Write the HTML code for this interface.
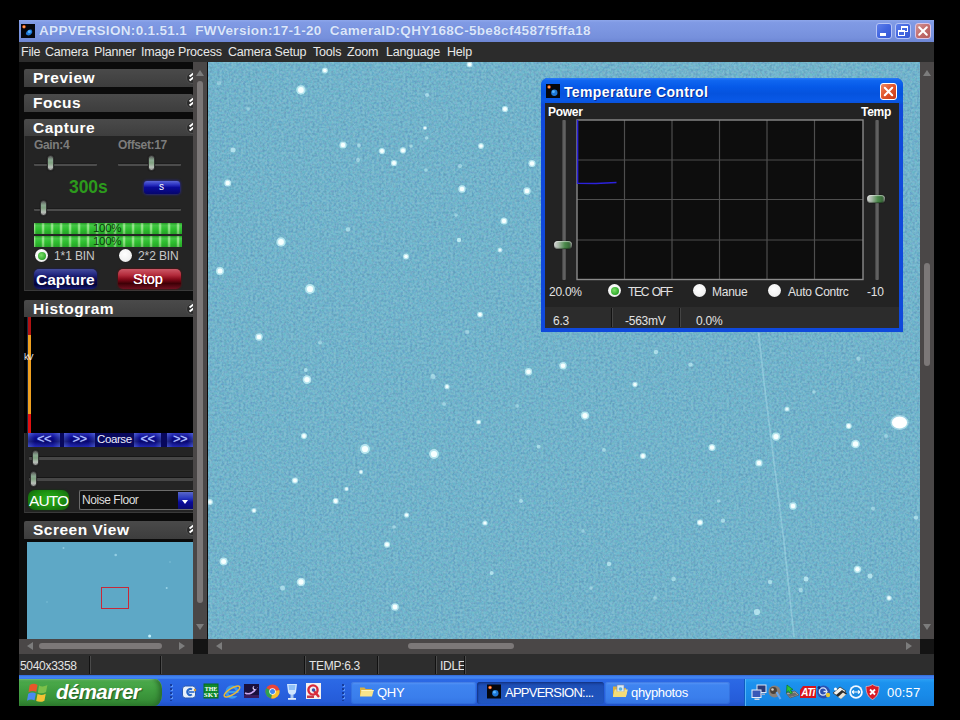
<!DOCTYPE html>
<html><head><meta charset="utf-8"><title>QHY</title>
<style>
*{box-sizing:border-box;margin:0;padding:0}
html,body{width:960px;height:720px;overflow:hidden;background:#000}
body{position:relative;font-family:"Liberation Sans",sans-serif;font-size:12px;color:#e6e6e6}
.a{position:absolute}
.t{position:absolute;white-space:nowrap;line-height:1}
/* title bar */
#title{left:19px;top:20px;width:915px;height:22px;background:linear-gradient(#8da6ea 0,#809ae4 12%,#7b95e0 50%,#7690dc 80%,#6d86d4 100%)}
#title .txt{left:20px;top:4px;font-size:13.5px;font-weight:bold;color:#dbe6fb;letter-spacing:.33px;text-shadow:0 0 1px #5f78c8}
.tb{top:3px;width:16px;height:16px;border:1px solid #b6c4f6;border-radius:3px;background:linear-gradient(135deg,#5f80ea 0,#4266e0 50%,#3658d4 100%)}
/* menu */
#menu{left:19px;top:42px;width:915px;height:20px;background:#2c2c2c}
#menu .t{top:4px;font-size:12.5px;color:#e8e8e8;letter-spacing:-.2px}
/* left panel */
#left{left:19px;top:62px;width:189px;height:592px;background:#0b0b0b}
.hd{left:5px;width:169px;height:18px;background:linear-gradient(#4a4a4a,#3d3d3d);border-radius:2px 2px 0 0}
.hd .t{left:9px;top:1px;font-size:15.5px;font-weight:bold;color:#fff;letter-spacing:.5px}
.pn{left:5px;width:169px;background:#242424}

.ic{position:absolute;left:162px;top:3px;width:12px;height:12px;border-radius:50%;background:#2c2c2c;border:1px solid #505050;overflow:hidden}
.ic:before{content:"";position:absolute;left:2px;top:1px;width:5px;height:2px;background:#fff;transform:rotate(-40deg)}
.ic:after{content:"";position:absolute;left:2px;top:5px;width:5px;height:2px;background:#fff;transform:rotate(-40deg)}
.gl{font-size:12px;font-weight:bold;color:#7c7c7c;letter-spacing:-.35px}
.bl{font-size:12px;color:#c8c8c8;letter-spacing:-.1px}
.trk{height:3px;background:#4c4c4c;border-top:1px solid #1c1c1c;border-radius:1px}
.trk2{height:4px;background:#474747;border-top:1px solid #161616;border-radius:1px}
.knob{width:7px;height:16px;border-radius:3.5px;background:linear-gradient(#5a5a5a 0,#8aa890 30%,#7fa080 50%,#b8c0b8 80%,#8a8a8a 100%);border:1px solid #333;box-shadow:0 0 1px #000}
.sbtn{border-radius:3px;background:linear-gradient(#5a66d8 0,#2a30c0 30%,#0a0a98 50%,#06066c 100%);box-shadow:0 0 3px #2a2ad0}
.pbar{width:148px;height:11px;background:linear-gradient(rgba(0,60,0,.25) 0,rgba(255,255,255,.12) 20%,rgba(255,255,255,0) 55%,rgba(0,40,0,.18) 100%),repeating-linear-gradient(90deg,#b4f0a4 0,#52d04e 1.2px,#2fc030 2.4px,#2cbc2e 7px,#52d04e 8px,#b4f0a4 9px);overflow:hidden}
.pbar .t{left:59px;top:0;font-size:11.5px;color:#0a3a0a;letter-spacing:-.3px}
.rad{width:13px;height:13px;border-radius:50%;background:radial-gradient(circle at 45% 40%,#fff 0,#f2f2f2 60%,#c8c8c8 100%);box-shadow:0 0 1px #000}
.cbtn{width:63px;height:20px;border-radius:5px;background:linear-gradient(#444c9c 0,#272c84 25%,#0c0c58 50%,#05053a 78%,#141a74 100%);box-shadow:0 0 2px #14146c}
.stbtn{width:63px;height:20px;border-radius:5px;background:linear-gradient(#cc5866 0,#b42c3c 30%,#880a1a 50%,#3e0006 72%,#701020 100%);box-shadow:0 0 2px #700}
.nb{top:0;height:14px;background:linear-gradient(rgba(120,140,255,.35) 0,rgba(0,0,40,.15) 35%,rgba(0,0,30,.35) 60%,rgba(90,110,240,.3) 100%),linear-gradient(90deg,#3a48c0 0,#0c0ca0 22%,#08088c 50%,#0c0ca0 78%,#3a48c0 100%);overflow:hidden}
.nb span{position:absolute;left:0;right:0;top:-1px;text-align:center;font-size:13px;line-height:14px;color:#aebeff;font-weight:normal;letter-spacing:-.5px;text-shadow:0 0 1px #8ea0ff}

.dots{width:4px;height:17px;background:radial-gradient(circle at 1px 1px,#163c9c 0,#163c9c .9px,transparent 1.1px) 0 0/4px 4px, radial-gradient(circle at 2px 2px,#5a94f4 0,#5a94f4 .8px,transparent 1px) 0 0/4px 4px}
.tk{top:7px;height:22px;border-radius:3px;background:linear-gradient(#5a98f8 0,#3f84f0 14%,#3a7eec 70%,#3474e2 100%);box-shadow:inset 0 0 0 1px rgba(40,90,200,.35)}
.tk.act{background:linear-gradient(#1a44a4 0,#1e50b8 20%,#2056c0 100%);box-shadow:inset 1px 1px 2px #123280}

.dl{font-size:12px;color:#e2e2e2;letter-spacing:-.25px}
.vtrk{width:4px;background:linear-gradient(90deg,#3a3a3a,#6a6a6a 50%,#4a4a4a);border-radius:1px}
.hknob{width:18px;height:8px;border-radius:4px;background:linear-gradient(90deg,#d8d8d8 0,#a8b8a8 25%,#4a8a4a 60%,#3a6a3a 85%,#8a8a8a 100%);box-shadow:0 0 1px #000, inset 0 1px 1px rgba(255,255,255,.5), inset 0 -1px 1px rgba(0,0,0,.4)}
/* image */
#img{left:208px;top:62px;width:712px;height:577px;background:#72b3cb;overflow:hidden}
/* scrollbars */
.sb{background:#4a4747}
.th{background:#7c7878;border-radius:3px}
/* status */
#status{left:19px;top:654px;width:915px;height:21px;background:#2d2d2d}
#status .t{top:6px;font-size:12px;color:#e4e4e4;letter-spacing:-.3px}
#status i{position:absolute;top:2px;width:1px;height:18px;background:#111;border-right:1px solid #4a4a4a;box-sizing:content-box}
/* taskbar */
#task{left:19px;top:675px;width:915px;height:31px;background:linear-gradient(#3a80ee 0,#2c6ae6 10%,#2862e0 50%,#255cd8 85%,#1f50c4 100%)}
</style></head><body>

<div id="title" class="a">
  <svg class="a" style="left:2px;top:4px" width="14" height="14" viewBox="0 0 16 16"><rect width="16" height="16" fill="#05070d"/><circle cx="3.4" cy="3.2" r="2" fill="#ff5a1e"/><circle cx="3.4" cy="3.2" r="1" fill="#ffd070"/><path d="M5.500 11.500C6 8 9 6 12 6.500 13.500 8 13 11 10.500 12.500 8.500 13.500 6.500 13 5.500 11.500z" fill="#1e78d8"/><circle cx="9.500" cy="8.800" r="1.700" fill="#59b6ff"/></svg>
  <div class="t txt">APPVERSION:0.1.51.1&nbsp; FWVersion:17-1-20&nbsp; CameraID:QHY168C-5be8cf4587f5ffa18</div>
  <div class="a tb" style="left:857px"><div class="a" style="left:3px;top:9px;width:6px;height:3px;background:#fff"></div></div>
  <div class="a tb" style="left:876px"><div class="a" style="left:5px;top:2px;width:7px;height:6px;border:1px solid #fff;border-top-width:2px"></div><div class="a" style="left:2px;top:6px;width:7px;height:6px;border:1px solid #fff;border-top-width:2px;background:#4468e0"></div></div>
  <div class="a tb" style="left:896px;border-color:#dcc4e4;background:linear-gradient(135deg,#d29494 0,#c06a6a 55%,#b45a5a 100%)"><svg class="a" style="left:0;top:0" width="14" height="14" viewBox="0 0 14 14"><path d="M3.2 3.2L10.8 10.8M10.8 3.2L3.2 10.8" stroke="#fff" stroke-width="2" stroke-linecap="round"/></svg></div>
</div>

<div id="menu" class="a">
  <div class="t" style="left:2px">File</div>
  <div class="t" style="left:26px">Camera</div>
  <div class="t" style="left:75px">Planner</div>
  <div class="t" style="left:122px">Image Process</div>
  <div class="t" style="left:209px">Camera Setup</div>
  <div class="t" style="left:294px">Tools</div>
  <div class="t" style="left:328px">Zoom</div>
  <div class="t" style="left:367px">Language</div>
  <div class="t" style="left:428px">Help</div>
</div>

<div id="left" class="a">
<!-- headers -->
<div class="a hd" style="top:7px"><div class="t">Preview</div><div class="ic"></div></div>
<div class="a hd" style="top:32px"><div class="t">Focus</div><div class="ic"></div></div>
<div class="a hd" style="top:57px"><div class="t">Capture</div><div class="ic"></div></div>
<!-- capture panel : page y 136..291 => local 74..229 -->
<div class="a pn" style="top:74px;height:155px;border-left:1px solid #343434;border-bottom:1px solid #3a3a3a">
  <div class="t gl" style="left:9px;top:3px">Gain:4</div>
  <div class="t gl" style="left:93px;top:3px">Offset:17</div>
  <div class="a trk" style="left:9px;top:27px;width:63px"></div><div class="a knob" style="left:22px;top:19px"></div>
  <div class="a trk" style="left:93px;top:27px;width:63px"></div><div class="a knob" style="left:123px;top:19px"></div>
  <div class="t" style="left:44px;top:43px;font-size:17.5px;font-weight:bold;color:#2c9a1c;letter-spacing:-.1px">300s</div>
  <div class="a sbtn" style="left:119px;top:45px;width:36px;height:13px"><div class="t" style="left:15px;top:1px;font-size:10px;color:#fff">s</div></div>
  <div class="a trk" style="left:9px;top:72px;width:147px"></div><div class="a knob" style="left:15px;top:64px"></div>
  <div class="a pbar" style="left:9px;top:87px"><div class="t">100%</div></div>
  <div class="a pbar" style="left:9px;top:99.5px"><div class="t">100%</div></div>
  <div class="a rad" style="left:10px;top:113px"><div class="a" style="left:2.5px;top:2.5px;width:8px;height:8px;border-radius:50%;background:radial-gradient(circle at 40% 40%,#7de06a,#2ea82a 70%)"></div></div>
  <div class="t bl" style="left:29px;top:114px">1*1 BIN</div>
  <div class="a rad" style="left:94px;top:113px"></div>
  <div class="t bl" style="left:113px;top:114px">2*2 BIN</div>
  <div class="a cbtn" style="left:9px;top:133px"><div class="t" style="left:2px;top:3px;font-size:15.5px;font-weight:bold;color:#fff">Capture</div></div>
  <div class="a stbtn" style="left:93px;top:133px"><div class="t" style="left:15px;top:3px;font-size:14.5px;color:#fff;text-shadow:0 0 .5px #fff">Stop</div></div>
</div>
<!-- histogram -->
<div class="a hd" style="top:238px"><div class="t">Histogram</div><div class="ic"></div></div>
<div class="a" style="left:5px;top:255px;width:169px;height:116px;background:#000">
  <div class="a" style="left:3px;top:0;width:1px;height:116px;background:#1c2a40"></div>
  <div class="a" style="left:4px;top:0;width:3px;height:18px;background:#b01212"></div>
  <div class="a" style="left:4px;top:18px;width:3px;height:79px;background:#f0a020"></div>
  <div class="a" style="left:4px;top:97px;width:3px;height:19px;background:#e01010"></div>
  <div class="t" style="left:0;top:36px;font-size:9px;color:#eee;letter-spacing:-1px">kV</div>
</div>
<div class="a pn" style="top:371px;height:80px;border-left:1px solid #343434;border-bottom:1px solid #3a3a3a"></div>
<div class="a" style="left:9px;top:371px;width:165px;height:14px;background:#08085c">
  <div class="a nb" style="left:0;width:32px"><span>&lt;&lt;</span></div>
  <div class="a nb" style="left:36px;width:31px"><span>&gt;&gt;</span></div>
  <div class="t" style="left:69px;top:1px;font-size:11.5px;color:#eef;letter-spacing:-.4px">Coarse</div>
  <div class="a nb" style="left:106px;width:27px"><span>&lt;&lt;</span></div>
  <div class="a nb" style="left:139px;width:26px"><span>&gt;&gt;</span></div>
</div>
<div class="a trk2" style="left:10px;top:393.5px;width:164px"></div><div class="a knob" style="left:13px;top:388px"></div>
<div class="a trk2" style="left:10px;top:414.5px;width:164px"></div><div class="a knob" style="left:11px;top:409px"></div>
<div class="a" style="left:9px;top:428px;width:41px;height:20px;border-radius:7px;background:radial-gradient(ellipse at 50% 45%,#2cb01c 0,#1f9412 45%,#0e5c0a 100%);box-shadow:0 0 2px #0a3a06"><div class="t" style="left:1px;top:3px;font-size:15.5px;color:#fff;letter-spacing:-.9px">AUTO</div></div>
<div class="a" style="left:60px;top:428px;width:114px;height:20px;background:#111;border:1px solid #6c6c6c;border-right:0;border-radius:2px 0 0 2px">
  <div class="t" style="left:2px;top:3px;font-size:12px;color:#ddd;letter-spacing:-.45px">Noise Floor</div>
  <div class="a" style="left:98px;top:1px;width:15px;height:17px;background:linear-gradient(#5a68c8 0,#2a3ac0 35%,#0a0a9a 60%,#0a0a70 100%)"><div class="a" style="left:4px;top:8px;width:0;height:0;border:3.5px solid transparent;border-top:4px solid #fff;border-bottom:0"></div></div>
</div>
<!-- screen view -->
<div class="a hd" style="top:459px"><div class="t">Screen View</div><div class="ic"></div></div>
<div class="a" style="left:8px;top:480px;width:166px;height:97px;background:#5ea8c6;overflow:hidden">
  <svg class="a" style="left:0;top:0" width="166" height="97"><g fill="#c8f4ff">
  <circle cx="36.5" cy="6" r="1" opacity=".45"/><circle cx="88.7" cy="13" r="1.3" opacity=".5"/><circle cx="139.7" cy="46" r="1" opacity=".55"/><circle cx="122.6" cy="94" r="1.5" opacity=".95"/><circle cx="143" cy="20" r=".8" opacity=".35"/><circle cx="20" cy="60" r=".8" opacity=".3"/>
  </g><rect x="74.500" y="45.500" width="27" height="21" fill="none" stroke="#c82838" stroke-width="1"/></svg>
</div>
<!-- panel bottom h-scrollbar -->
<div class="a sb" style="left:0;top:577px;width:174px;height:15px">
  <div class="a" style="left:8px;top:3px;width:0;height:0;border:4px solid transparent;border-left:0;border-right:6px solid #7c7c7c"></div>
  <div class="a th" style="left:20px;top:4px;width:123px;height:6px"></div>
  <div class="a" style="left:160px;top:3px;width:0;height:0;border:4px solid transparent;border-right:0;border-left:6px solid #7c7c7c"></div>
</div>
<div class="a" style="left:174px;top:577px;width:15px;height:15px;background:#141414"></div>
<!-- panel v-scrollbar -->
<div class="a sb" style="left:174px;top:0;width:14px;height:577px">
  <div class="a" style="left:3px;top:8px;width:0;height:0;border:4px solid transparent;border-top:0;border-bottom:6px solid #7c7c7c"></div>
  <div class="a th" style="left:4px;top:19px;width:6px;height:522px"></div>
  <div class="a" style="left:3px;top:562px;width:0;height:0;border:4px solid transparent;border-bottom:0;border-top:6px solid #7c7c7c"></div>
</div>

</div>

<div id="img" class="a">
<svg class="a" style="left:0;top:0" width="712" height="577" viewBox="0 0 712 577">
<defs>
<filter id="nz" x="0" y="0" width="100%" height="100%" color-interpolation-filters="sRGB"><feTurbulence type="fractalNoise" baseFrequency="0.42" numOctaves="2" seed="7" result="n"/><feColorMatrix type="matrix" values="1.7 0.9 0 0 -0.853  0.7 1.9 0 0 -0.598  0.5 0.9 0.8 0 -0.304  0 0 0 0 1"/></filter>
<filter id="bl" x="-5%" y="-5%" width="110%" height="110%"><feGaussianBlur stdDeviation="0.65"/></filter>
</defs>
<rect width="712" height="577" filter="url(#nz)" opacity=".12"/>
<path d="M550.5 270.5 L556 320 L566 400 L576 480 L586 575" stroke="#b4e4f0" stroke-width="1.700" fill="none" opacity=".4" filter="url(#bl)"/>
<g filter="url(#bl)">
<circle cx="116.9" cy="8.5" r="2.9" fill="#c8f2f8" opacity="0.80"/>
<circle cx="116.9" cy="8.5" r="1.8" fill="#f6ffff" opacity="1.00"/>
<circle cx="92.9" cy="28.0" r="4.7" fill="#c8f2f8" opacity="0.80"/>
<circle cx="92.9" cy="28.0" r="2.9" fill="#f6ffff" opacity="1.00"/>
<circle cx="261.6" cy="2.5" r="2.9" fill="#c8f2f8" opacity="0.80"/>
<circle cx="261.6" cy="2.5" r="1.8" fill="#f6ffff" opacity="1.00"/>
<circle cx="219.0" cy="33.0" r="2.0" fill="#c8f2f8" opacity="0.62"/>
<circle cx="297.0" cy="47.0" r="3.1" fill="#c8f2f8" opacity="0.80"/>
<circle cx="297.0" cy="47.0" r="2.0" fill="#f6ffff" opacity="1.00"/>
<circle cx="217.0" cy="66.0" r="2.0" fill="#c8f2f8" opacity="0.64"/>
<circle cx="217.0" cy="66.0" r="1.3" fill="#f6ffff" opacity="0.80"/>
<circle cx="218.5" cy="76.0" r="1.8" fill="#c8f2f8" opacity="0.56"/>
<circle cx="135.0" cy="83.0" r="3.6" fill="#c8f2f8" opacity="0.80"/>
<circle cx="135.0" cy="83.0" r="2.2" fill="#f6ffff" opacity="1.00"/>
<circle cx="151.0" cy="83.5" r="2.0" fill="#c8f2f8" opacity="0.56"/>
<circle cx="174.0" cy="89.0" r="3.1" fill="#c8f2f8" opacity="0.80"/>
<circle cx="174.0" cy="89.0" r="2.0" fill="#f6ffff" opacity="1.00"/>
<circle cx="195.0" cy="88.4" r="3.1" fill="#c8f2f8" opacity="0.80"/>
<circle cx="195.0" cy="88.4" r="2.0" fill="#f6ffff" opacity="1.00"/>
<circle cx="203.0" cy="84.0" r="1.8" fill="#c8f2f8" opacity="0.50"/>
<circle cx="186.0" cy="101.0" r="3.1" fill="#c8f2f8" opacity="0.80"/>
<circle cx="186.0" cy="101.0" r="2.0" fill="#f6ffff" opacity="1.00"/>
<circle cx="150.0" cy="98.0" r="2.0" fill="#c8f2f8" opacity="0.56"/>
<circle cx="273.0" cy="84.0" r="2.9" fill="#c8f2f8" opacity="0.80"/>
<circle cx="273.0" cy="84.0" r="1.8" fill="#f6ffff" opacity="1.00"/>
<circle cx="324.0" cy="101.5" r="3.6" fill="#c8f2f8" opacity="0.80"/>
<circle cx="324.0" cy="101.5" r="2.2" fill="#f6ffff" opacity="1.00"/>
<circle cx="25.0" cy="88.0" r="2.5" fill="#c8f2f8" opacity="0.75"/>
<circle cx="19.7" cy="121.0" r="3.5" fill="#c8f2f8" opacity="0.80"/>
<circle cx="19.7" cy="121.0" r="2.2" fill="#f6ffff" opacity="1.00"/>
<circle cx="254.0" cy="127.0" r="3.7" fill="#c8f2f8" opacity="0.80"/>
<circle cx="254.0" cy="127.0" r="2.3" fill="#f6ffff" opacity="1.00"/>
<circle cx="319.0" cy="129.0" r="3.7" fill="#c8f2f8" opacity="0.80"/>
<circle cx="319.0" cy="129.0" r="2.3" fill="#f6ffff" opacity="1.00"/>
<circle cx="218.0" cy="108.0" r="1.8" fill="#c8f2f8" opacity="0.50"/>
<circle cx="252.0" cy="104.0" r="2.0" fill="#c8f2f8" opacity="0.50"/>
<circle cx="296.0" cy="159.0" r="3.5" fill="#c8f2f8" opacity="0.80"/>
<circle cx="296.0" cy="159.0" r="2.2" fill="#f6ffff" opacity="1.00"/>
<circle cx="140.0" cy="167.5" r="2.2" fill="#c8f2f8" opacity="0.62"/>
<circle cx="73.0" cy="180.0" r="4.7" fill="#c8f2f8" opacity="0.80"/>
<circle cx="73.0" cy="180.0" r="2.9" fill="#f6ffff" opacity="1.00"/>
<circle cx="251.0" cy="178.0" r="2.2" fill="#c8f2f8" opacity="0.88"/>
<circle cx="292.0" cy="188.0" r="2.5" fill="#c8f2f8" opacity="0.64"/>
<circle cx="292.0" cy="188.0" r="1.5" fill="#f6ffff" opacity="0.80"/>
<circle cx="198.0" cy="194.5" r="2.9" fill="#c8f2f8" opacity="0.80"/>
<circle cx="198.0" cy="194.5" r="1.8" fill="#f6ffff" opacity="1.00"/>
<circle cx="12.0" cy="209.0" r="4.0" fill="#c8f2f8" opacity="0.80"/>
<circle cx="12.0" cy="209.0" r="2.5" fill="#f6ffff" opacity="1.00"/>
<circle cx="102.0" cy="227.0" r="4.9" fill="#c8f2f8" opacity="0.80"/>
<circle cx="102.0" cy="227.0" r="3.1" fill="#f6ffff" opacity="1.00"/>
<circle cx="272.0" cy="252.6" r="2.9" fill="#c8f2f8" opacity="0.80"/>
<circle cx="272.0" cy="252.6" r="1.8" fill="#f6ffff" opacity="1.00"/>
<circle cx="11.0" cy="21.0" r="2.2" fill="#c8f2f8" opacity="0.38"/>
<circle cx="40.0" cy="47.0" r="1.8" fill="#c8f2f8" opacity="0.44"/>
<circle cx="248.0" cy="153.0" r="1.8" fill="#c8f2f8" opacity="0.50"/>
<circle cx="51.0" cy="275.0" r="3.7" fill="#c8f2f8" opacity="0.80"/>
<circle cx="51.0" cy="275.0" r="2.3" fill="#f6ffff" opacity="1.00"/>
<circle cx="99.0" cy="317.6" r="4.3" fill="#c8f2f8" opacity="0.80"/>
<circle cx="99.0" cy="317.6" r="2.7" fill="#f6ffff" opacity="1.00"/>
<circle cx="97.7" cy="308.0" r="2.0" fill="#c8f2f8" opacity="0.62"/>
<circle cx="112.0" cy="280.5" r="2.0" fill="#c8f2f8" opacity="0.50"/>
<circle cx="320.5" cy="309.7" r="3.7" fill="#c8f2f8" opacity="0.80"/>
<circle cx="320.5" cy="309.7" r="2.3" fill="#f6ffff" opacity="1.00"/>
<circle cx="225.0" cy="314.6" r="2.5" fill="#c8f2f8" opacity="0.56"/>
<circle cx="239.0" cy="324.7" r="2.6" fill="#c8f2f8" opacity="0.72"/>
<circle cx="239.0" cy="324.7" r="1.6" fill="#f6ffff" opacity="0.90"/>
<circle cx="270.6" cy="360.0" r="2.5" fill="#c8f2f8" opacity="0.72"/>
<circle cx="270.6" cy="360.0" r="1.5" fill="#f6ffff" opacity="0.90"/>
<circle cx="96.0" cy="374.0" r="3.0" fill="#c8f2f8" opacity="0.80"/>
<circle cx="96.0" cy="374.0" r="1.9" fill="#f6ffff" opacity="1.00"/>
<circle cx="157.0" cy="387.0" r="4.9" fill="#c8f2f8" opacity="0.80"/>
<circle cx="157.0" cy="387.0" r="3.1" fill="#f6ffff" opacity="1.00"/>
<circle cx="226.0" cy="392.0" r="4.9" fill="#c8f2f8" opacity="0.80"/>
<circle cx="226.0" cy="392.0" r="3.1" fill="#f6ffff" opacity="1.00"/>
<circle cx="153.0" cy="410.0" r="2.2" fill="#c8f2f8" opacity="0.64"/>
<circle cx="153.0" cy="410.0" r="1.4" fill="#f6ffff" opacity="0.80"/>
<circle cx="87.0" cy="418.5" r="3.1" fill="#c8f2f8" opacity="0.80"/>
<circle cx="87.0" cy="418.5" r="2.0" fill="#f6ffff" opacity="1.00"/>
<circle cx="138.6" cy="427.0" r="2.2" fill="#c8f2f8" opacity="0.64"/>
<circle cx="138.6" cy="427.0" r="1.4" fill="#f6ffff" opacity="0.80"/>
<circle cx="127.7" cy="439.0" r="3.0" fill="#c8f2f8" opacity="0.80"/>
<circle cx="127.7" cy="439.0" r="1.9" fill="#f6ffff" opacity="1.00"/>
<circle cx="46.0" cy="448.5" r="2.5" fill="#c8f2f8" opacity="0.72"/>
<circle cx="46.0" cy="448.5" r="1.5" fill="#f6ffff" opacity="0.90"/>
<circle cx="198.6" cy="453.0" r="2.6" fill="#c8f2f8" opacity="0.76"/>
<circle cx="198.6" cy="453.0" r="1.6" fill="#f6ffff" opacity="0.95"/>
<circle cx="277.0" cy="461.0" r="2.6" fill="#c8f2f8" opacity="0.76"/>
<circle cx="277.0" cy="461.0" r="1.6" fill="#f6ffff" opacity="0.95"/>
<circle cx="179.0" cy="482.6" r="3.1" fill="#c8f2f8" opacity="0.80"/>
<circle cx="179.0" cy="482.6" r="2.0" fill="#f6ffff" opacity="1.00"/>
<circle cx="15.6" cy="499.5" r="4.0" fill="#c8f2f8" opacity="0.80"/>
<circle cx="15.6" cy="499.5" r="2.5" fill="#f6ffff" opacity="1.00"/>
<circle cx="93.0" cy="520.0" r="4.3" fill="#c8f2f8" opacity="0.80"/>
<circle cx="93.0" cy="520.0" r="2.7" fill="#f6ffff" opacity="1.00"/>
<circle cx="313.0" cy="439.0" r="2.0" fill="#c8f2f8" opacity="0.62"/>
<circle cx="330.6" cy="384.7" r="2.0" fill="#c8f2f8" opacity="0.62"/>
<circle cx="283.7" cy="511.0" r="2.0" fill="#c8f2f8" opacity="0.75"/>
<circle cx="2.0" cy="440.0" r="2.9" fill="#c8f2f8" opacity="0.80"/>
<circle cx="2.0" cy="440.0" r="1.8" fill="#f6ffff" opacity="1.00"/>
<circle cx="259.0" cy="270.0" r="2.2" fill="#c8f2f8" opacity="0.44"/>
<circle cx="186.0" cy="465.0" r="1.8" fill="#c8f2f8" opacity="0.56"/>
<circle cx="236.0" cy="342.0" r="2.0" fill="#c8f2f8" opacity="0.50"/>
<circle cx="309.0" cy="344.0" r="2.0" fill="#c8f2f8" opacity="0.44"/>
<circle cx="74.5" cy="526.0" r="2.5" fill="#c8f2f8" opacity="0.62"/>
<circle cx="187.0" cy="545.0" r="3.8" fill="#c8f2f8" opacity="0.80"/>
<circle cx="187.0" cy="545.0" r="2.4" fill="#f6ffff" opacity="1.00"/>
<circle cx="355.0" cy="303.7" r="3.7" fill="#c8f2f8" opacity="0.80"/>
<circle cx="355.0" cy="303.7" r="2.3" fill="#f6ffff" opacity="1.00"/>
<circle cx="448.0" cy="290.0" r="2.2" fill="#c8f2f8" opacity="0.69"/>
<circle cx="482.5" cy="302.6" r="2.2" fill="#c8f2f8" opacity="0.62"/>
<circle cx="427.0" cy="322.5" r="2.7" fill="#c8f2f8" opacity="0.72"/>
<circle cx="427.0" cy="322.5" r="1.7" fill="#f6ffff" opacity="0.90"/>
<circle cx="377.0" cy="353.6" r="4.1" fill="#c8f2f8" opacity="0.80"/>
<circle cx="377.0" cy="353.6" r="2.6" fill="#f6ffff" opacity="1.00"/>
<circle cx="579.0" cy="347.0" r="2.6" fill="#c8f2f8" opacity="0.64"/>
<circle cx="579.0" cy="347.0" r="1.6" fill="#f6ffff" opacity="0.80"/>
<circle cx="568.0" cy="374.6" r="4.1" fill="#c8f2f8" opacity="0.80"/>
<circle cx="568.0" cy="374.6" r="2.6" fill="#f6ffff" opacity="1.00"/>
<circle cx="504.0" cy="385.5" r="3.5" fill="#c8f2f8" opacity="0.80"/>
<circle cx="504.0" cy="385.5" r="2.2" fill="#f6ffff" opacity="1.00"/>
<circle cx="435.0" cy="394.0" r="3.0" fill="#c8f2f8" opacity="0.80"/>
<circle cx="435.0" cy="394.0" r="1.9" fill="#f6ffff" opacity="1.00"/>
<circle cx="551.0" cy="401.0" r="3.6" fill="#c8f2f8" opacity="0.80"/>
<circle cx="551.0" cy="401.0" r="2.2" fill="#f6ffff" opacity="1.00"/>
<circle cx="640.7" cy="364.0" r="3.0" fill="#c8f2f8" opacity="0.80"/>
<circle cx="640.7" cy="364.0" r="1.9" fill="#f6ffff" opacity="1.00"/>
<circle cx="647.5" cy="382.0" r="4.3" fill="#c8f2f8" opacity="0.80"/>
<circle cx="647.5" cy="382.0" r="2.7" fill="#f6ffff" opacity="1.00"/>
<circle cx="585.0" cy="444.0" r="3.7" fill="#c8f2f8" opacity="0.80"/>
<circle cx="585.0" cy="444.0" r="2.3" fill="#f6ffff" opacity="1.00"/>
<circle cx="492.0" cy="460.5" r="3.1" fill="#c8f2f8" opacity="0.80"/>
<circle cx="492.0" cy="460.5" r="2.0" fill="#f6ffff" opacity="1.00"/>
<circle cx="515.0" cy="458.6" r="2.2" fill="#c8f2f8" opacity="0.62"/>
<circle cx="649.5" cy="507.3" r="3.6" fill="#c8f2f8" opacity="0.80"/>
<circle cx="649.5" cy="507.3" r="2.2" fill="#f6ffff" opacity="1.00"/>
<circle cx="662.0" cy="514.0" r="2.5" fill="#c8f2f8" opacity="0.75"/>
<circle cx="708.0" cy="455.6" r="2.2" fill="#c8f2f8" opacity="0.62"/>
<circle cx="396.0" cy="388.0" r="2.0" fill="#c8f2f8" opacity="0.56"/>
<circle cx="401.0" cy="502.0" r="2.2" fill="#c8f2f8" opacity="0.69"/>
<circle cx="650.5" cy="296.6" r="2.2" fill="#c8f2f8" opacity="0.50"/>
<circle cx="598.0" cy="517.0" r="2.5" fill="#c8f2f8" opacity="0.75"/>
<circle cx="606.0" cy="330.0" r="1.8" fill="#c8f2f8" opacity="0.50"/>
<circle cx="510.6" cy="439.0" r="1.8" fill="#c8f2f8" opacity="0.50"/>
<circle cx="665.0" cy="446.6" r="2.0" fill="#c8f2f8" opacity="0.50"/>
<circle cx="375.0" cy="469.0" r="1.8" fill="#c8f2f8" opacity="0.44"/>
<circle cx="678.0" cy="374.0" r="2.0" fill="#c8f2f8" opacity="0.50"/>
<circle cx="681.0" cy="536.0" r="2.7" fill="#c8f2f8" opacity="0.72"/>
<circle cx="681.0" cy="536.0" r="1.7" fill="#f6ffff" opacity="0.90"/>
<circle cx="549.0" cy="550.0" r="3.1" fill="#c8f2f8" opacity="0.75"/>
<circle cx="562.0" cy="520.0" r="2.2" fill="#c8f2f8" opacity="0.62"/>
<circle cx="592.7" cy="528.0" r="2.2" fill="#c8f2f8" opacity="0.56"/>
<circle cx="465.6" cy="517.0" r="2.2" fill="#c8f2f8" opacity="0.56"/>
<circle cx="383.0" cy="526.0" r="1.8" fill="#c8f2f8" opacity="0.50"/>
<circle cx="447.0" cy="536.0" r="1.8" fill="#c8f2f8" opacity="0.50"/>
<ellipse cx="691.5" cy="360.5" rx="9.1" ry="7.5" fill="#c4eef6" opacity=".6"/>
<ellipse cx="691.5" cy="360.5" rx="7.6" ry="6.0" fill="#ffffff"/>
</g>
</svg>
</div>

<!-- right vertical scrollbar -->
<div class="a sb" style="left:920px;top:62px;width:14px;height:577px">
  <div class="a" style="left:3px;top:8px;width:0;height:0;border:4px solid transparent;border-top:0;border-bottom:6px solid #7c7c7c"></div>
  <div class="a th" style="left:4px;top:201px;width:6px;height:103px"></div>
  <div class="a" style="left:3px;top:562px;width:0;height:0;border:4px solid transparent;border-bottom:0;border-top:6px solid #7c7c7c"></div>
</div>
<!-- bottom horizontal scrollbar -->
<div class="a sb" style="left:208px;top:639px;width:712px;height:15px">
  <div class="a" style="left:8px;top:3px;width:0;height:0;border:4px solid transparent;border-left:0;border-right:6px solid #7c7c7c"></div>
  <div class="a th" style="left:200px;top:4px;width:106px;height:6px"></div>
  <div class="a" style="left:698px;top:3px;width:0;height:0;border:4px solid transparent;border-right:0;border-left:6px solid #7c7c7c"></div>
</div>
<div class="a" style="left:920px;top:639px;width:14px;height:15px;background:#141414"></div>

<div id="status" class="a">
  <div class="t" style="left:1px">5040x3358</div>
  <i style="left:70px"></i><i style="left:141px"></i><i style="left:285px"></i>
  <div class="t" style="left:290px">TEMP:6.3</div>
  <i style="left:358px"></i><i style="left:416px"></i>
  <div class="t" style="left:421px">IDLE</div>
  <i style="left:445px"></i>
</div>

<div id="task" class="a">
<div class="a" style="left:0;top:0;width:915px;height:4px;background:linear-gradient(#3168d8,#4488f4 50%,#3a7aee)"></div>
<!-- start button -->
<div class="a" style="left:0;top:4px;width:143px;height:27px;border-radius:0 7px 8px 0/0 10px 12px 0;background:linear-gradient(#62ba60 0,#4aa94a 12%,#3f9c3f 45%,#389038 75%,#2c7c2c 100%);box-shadow:inset -4px 0 5px -1px #2a6c2a, inset 0 1px 1px #86d486">
  <svg class="a" style="left:8px;top:3px" width="23" height="22" viewBox="0 0 21 20">
    <path d="M2.5 2.8 C5 1.2 7.5 1.4 9.6 2.6 L8.4 9 C6.3 7.8 3.9 7.8 1.4 9.2Z" fill="#e8562a"/>
    <path d="M11 3.2 C13.3 4.4 15.8 4.3 18.6 2.8 L17.4 9.2 C14.8 10.6 12.2 10.6 9.9 9.5Z" fill="#7cc04a"/>
    <path d="M1.1 10.6 C3.6 9.2 6 9.3 8.1 10.4 L6.9 16.8 C4.8 15.6 2.4 15.7 0 17Z" fill="#4a8af0"/>
    <path d="M9.6 11 C11.9 12.1 14.4 12 17.1 10.6 L15.9 17 C13.3 18.4 10.8 18.3 8.4 17.3Z" fill="#f4c234"/>
  </svg>
  <div class="t" style="left:37px;top:3px;font-size:20.5px;font-weight:bold;font-style:italic;color:#fff;letter-spacing:-.6px;text-shadow:1px 1px 1px #245c24">démarrer</div>
</div>
<div class="a dots" style="left:151px;top:9px"></div>
<!-- quick launch icons : centres page x 188.75 210.5 231 251 272.5 291 313 ; y centre 691 => local 14 -->
<svg class="a" style="left:161px;top:7px" width="180" height="22" viewBox="0 0 180 22">
  <!-- 1 white/blue -->
  <g transform="translate(2.5,2)"><rect x="0" y="2" width="13" height="12" rx="3" fill="#e8f0fa" stroke="#2a5ab0" stroke-width="1"/><path d="M9.500 5.500A3 3 0 1 0 9.500 10.500" fill="none" stroke="#2868c8" stroke-width="2"/><path d="M6 8h6" stroke="#2868c8" stroke-width="1.600"/><circle cx="12.500" cy="6" r="1.200" fill="#d89a30"/></g>
  <!-- 2 TheSky -->
  <g transform="translate(24,2)"><rect width="14" height="14" fill="#0f8a2c"/><rect x="0" y="0" width="14" height="14" fill="none" stroke="#0a6a20"/><text x="7" y="6.500" font-family="Liberation Serif,serif" font-size="6" font-weight="bold" fill="#fff" text-anchor="middle">THE</text><text x="7" y="12.800" font-family="Liberation Serif,serif" font-size="7" font-weight="bold" fill="#fff" text-anchor="middle">SKY</text></g>
  <!-- 3 IE -->
  <g transform="translate(44,1)"><circle cx="8" cy="9" r="5.200" fill="none" stroke="#3a9af0" stroke-width="3"/><rect x="4" y="8" width="9" height="2" fill="#3a9af0"/><rect x="9" y="10" width="6" height="3" fill="#2a5fd8"/><ellipse cx="8" cy="8.500" rx="9" ry="3.200" fill="none" stroke="#e8b838" stroke-width="1.500" transform="rotate(-32 8 8.500)"/></g>
  <!-- 4 dark purple -->
  <g transform="translate(64,2)"><rect width="15" height="14" fill="#1a103c"/><path d="M1 9C5 11 10 9 13 3" stroke="#c8a8f0" stroke-width="1.600" fill="none"/><path d="M0 11h15v3H0z" fill="#3a1a5a"/><circle cx="10.500" cy="4" r="2" fill="#e8d8ff"/><circle cx="11.500" cy="3.500" r="1.800" fill="#1a103c"/></g>
  <!-- 5 chrome -->
  <g transform="translate(85,2)"><circle cx="7.500" cy="7.500" r="7" fill="#e8453a"/><path d="M7.500 7.500L1.400 4A7 7 0 0 0 6.300 14.400z" fill="#2fa24f"/><path d="M7.500 7.500L6.300 14.400A7 7 0 0 0 14.400 6z" fill="#f6c12c"/><circle cx="7.500" cy="7.500" r="3.200" fill="#fff"/><circle cx="7.500" cy="7.500" r="2.500" fill="#3f86f0"/></g>
  <!-- 6 glass -->
  <g transform="translate(105,1)"><path d="M2 1h10l-1 8c-.5 2-2 3-4 3s-3.500-1-4-3z" fill="#cfe6ff"/><path d="M3.500 2h7l-.6 5h-5.800z" fill="#8ec0f8"/><rect x="5.500" y="12" width="3" height="3" fill="#a8c8f0"/><rect x="3" y="15" width="8" height="1.800" fill="#e0ecfa"/></g>
  <!-- 7 white red Q -->
  <g transform="translate(126,1)"><rect width="15" height="16" fill="#f4f0f0"/><circle cx="7" cy="7" r="4.600" fill="none" stroke="#d82a3a" stroke-width="2.400"/><path d="M8 8l5 6" stroke="#d82a3a" stroke-width="2.400"/><circle cx="7.500" cy="7" r="1.800" fill="#3a50a8"/><rect x="1" y="12.500" width="7" height="2.500" fill="#c83a48"/></g>
</svg>
<div class="a dots" style="left:323px;top:9px"></div>
<!-- task buttons -->
<div class="a tk" style="left:332px;width:125px">
  <svg class="a" style="left:9px;top:3px" width="14" height="12" viewBox="0 0 14 12"><path d="M0 2.500h4.500l1.200 1.500H12v7H0z" fill="#d8b040"/><path d="M1.500 5h12.300l-1.800 6.500H0z" fill="#f8e48a"/><path d="M1.500 5h12.300l-.3 1H1.300z" fill="#fff6c0"/></svg>
  <div class="t" style="left:26px;top:4px;font-size:13px;color:#fff;letter-spacing:-.3px">QHY</div>
</div>
<div class="a tk act" style="left:458px;width:127px">
  <svg class="a" style="left:10px;top:2px" width="14" height="15" viewBox="0 0 16 16"><rect width="16" height="16" fill="#05070d"/><circle cx="3.500" cy="3.500" r="2" fill="#ff5a1e"/><circle cx="3.500" cy="3.500" r="1" fill="#ffd070"/><circle cx="9.500" cy="10" r="3.600" fill="#1e78d8"/><circle cx="8.500" cy="8.800" r="1.600" fill="#59b6ff"/></svg>
  <div class="t" style="left:28px;top:4px;font-size:13px;color:#fff;letter-spacing:-.75px">APPVERSION:...</div>
</div>
<div class="a tk" style="left:586px;width:125px">
  <svg class="a" style="left:8px;top:2px" width="15" height="14" viewBox="0 0 15 14"><path d="M0 2.500h4.500l1.200 1.500H13v9H0z" fill="#d8b040"/><path d="M1.800 5.500h13l-2 7.500H0z" fill="#f8e48a"/><rect x="4" y="1" width="7" height="7" fill="#d8ecf8" stroke="#88a" stroke-width=".6"/><circle cx="7.500" cy="5" r="1.800" fill="#58b0e0"/><path d="M1.800 7.500h12.400l-1.500 5.500H0z" fill="#f4dc78"/></svg>
  <div class="t" style="left:26px;top:4px;font-size:13px;color:#fff;letter-spacing:-.35px">qhyphotos</div>
</div>
<!-- tray -->
<div class="a" style="left:725px;top:4px;width:190px;height:27px;background:linear-gradient(#2aa0f4 0,#1c92ee 14%,#188ae8 60%,#1680de 100%);border-left:1px solid #0f5cc0;box-shadow:inset 1px 0 0 #52b4f8">
  <svg class="a" style="left:0;top:2px" width="150" height="22" viewBox="0 0 150 22">
    <!-- network -->
    <g transform="translate(7,4)"><rect x="5" y="0" width="9" height="7.500" fill="#2a3a78" stroke="#dfe6f4" stroke-width="1"/><rect x="0" y="5" width="9" height="7.500" fill="#3a58b8" stroke="#e8eefa" stroke-width="1"/><rect x="2.500" y="13.500" width="5" height="1.500" fill="#cdd6ea"/><rect x="8" y="8.500" width="5" height="1.500" fill="#9aa8c8"/></g>
    <!-- speaker/round -->
    <g transform="translate(22.5,4)"><circle cx="7" cy="6.500" r="6" fill="#8a8078"/><circle cx="6" cy="5.500" r="3.400" fill="#4a4038"/><path d="M9 7l4 7" stroke="#6aa8f0" stroke-width="2"/><circle cx="5" cy="4.500" r="1.300" fill="#d8d0c8"/></g>
    <!-- safely remove -->
    <g transform="translate(39,3)"><path d="M2 9l9-2 4 4-9 3z" fill="#a8a8a8" stroke="#555" stroke-width=".7"/><path d="M3 10.500l8-2 2.500 2.500-7.500 2z" fill="#6a6a6a"/><path d="M3 1l6 4.500-2.500.5 2 3-2 .8-2-3-2 1.800z" fill="#2cc43a" stroke="#0a6a1a" stroke-width=".6"/></g>
    <!-- ATI -->
    <g transform="translate(55,5)"><path d="M3 0h13v12H0V4z" fill="#d8141c"/><text x="8" y="10" font-family="Liberation Sans,sans-serif" font-size="10" font-weight="bold" font-style="italic" fill="#fff" text-anchor="middle" letter-spacing="-.6">ATi</text></g>
    <!-- globe -->
    <g transform="translate(71.5,3)"><circle cx="7" cy="8" r="6.500" fill="#2a50b0"/><circle cx="6.500" cy="7.500" r="3.600" fill="none" stroke="#d8e4fa" stroke-width="1.400"/><path d="M7 7.500h4" stroke="#d8e4fa" stroke-width="1.400"/><circle cx="11.500" cy="11" r="2.200" fill="#e8c830"/><circle cx="2.500" cy="3.500" r="1.500" fill="#1a2a70"/></g>
    <!-- printer -->
    <g transform="translate(87,4)"><path d="M1 8l7-6 6 4-7 6z" fill="#f4f4f0" stroke="#333" stroke-width=".8"/><path d="M4 10l6-5 5 3.500-6 5.500z" fill="#2a2a2a"/><path d="M6 12l5-4.500 3 2-5 4.500z" fill="#e8e4d8"/><circle cx="3.500" cy="4" r="1.500" fill="#fff"/></g>
    <!-- teamviewer -->
    <g transform="translate(103.5,3)"><circle cx="7.500" cy="8" r="6.800" fill="#f4f8ff"/><circle cx="7.500" cy="8" r="5" fill="#1a88e0"/><path d="M3.500 8h8M3.500 8l2-1.600M3.500 8l2 1.600M11.500 8l-2-1.600M11.500 8l-2 1.600" stroke="#fff" stroke-width="1.200" fill="none"/></g>
    <!-- red shield -->
    <g transform="translate(120,3)"><path d="M7.500 0.500C9.500 2 12 2.500 14 2.500 14 9 12 13 7.500 15.500 3 13 1 9 1 2.500 3 2.500 5.500 2 7.500.5z" fill="#d81c28" stroke="#f8c0c0" stroke-width=".7"/><path d="M5 5.500l5 5M10 5.500l-5 5" stroke="#fff" stroke-width="1.800"/></g>
  </svg>
  <div class="t" style="left:142px;top:7px;font-size:13px;color:#fff;letter-spacing:.15px">00:57</div>
</div>

</div>

<div class="a" id="dlg" style="left:541px;top:78px;width:362px;height:254px;border-radius:7px 7px 0 0;background:#0f49dc;overflow:hidden">
  <div class="a" style="left:0;top:0;width:362px;height:26px;background:linear-gradient(#2a7af8 0,#0f66f0 10%,#0659e8 35%,#0553de 60%,#0858e6 85%,#0b50d8 100%)"></div>
  <svg class="a" style="left:5px;top:6px" width="14" height="14" viewBox="0 0 16 16"><rect width="16" height="16" fill="#05070d"/><circle cx="3.500" cy="3.500" r="2" fill="#ff5a1e"/><circle cx="3.500" cy="3.500" r="1" fill="#ffd070"/><circle cx="9.500" cy="10" r="3.600" fill="#1e78d8"/><circle cx="8.500" cy="8.800" r="1.600" fill="#59b6ff"/></svg>
  <div class="t" style="left:23px;top:7px;font-size:14px;font-weight:bold;color:#fff;letter-spacing:.36px;text-shadow:1px 1px 0 #0a2a90">Temperature Control</div>
  <div class="a" style="left:339px;top:5px;width:17px;height:17px;border:1px solid #fff;border-radius:3px;background:linear-gradient(135deg,#f08a62 0,#e2582e 45%,#c83a18 100%)"><svg class="a" style="left:0;top:0" width="15" height="15" viewBox="0 0 15 15"><path d="M3.800 3.800L11.200 11.200M11.200 3.800L3.800 11.200" stroke="#fff" stroke-width="2.100" stroke-linecap="round"/></svg></div>
  <!-- content -->
  <div class="a" style="left:4px;top:25px;width:354px;height:225px;background:#232323">
    <div class="t dl" style="left:3px;top:3px;font-weight:bold;color:#fff;letter-spacing:-.3px">Power</div>
    <div class="t dl" style="left:316px;top:3px;font-weight:bold;color:#fff;letter-spacing:-.3px">Temp</div>
    <!-- sliders -->
    <div class="a vtrk" style="left:17px;top:17px;height:160px"></div>
    <div class="a hknob" style="left:9px;top:138px"></div>
    <div class="a vtrk" style="left:330px;top:17px;height:160px"></div>
    <div class="a hknob" style="left:322px;top:92px"></div>
    <!-- graph: page x 577..862, y 120..279 => local 32..317 , 17..176 -->
    <svg class="a" style="left:31px;top:16px" width="288" height="162" viewBox="0 0 288 162">
      <rect x="1" y="1" width="286" height="160" fill="#0d0d0d"/>
      <g stroke="#4e4e4e" stroke-width="1.200"><path d="M48.500 1v160M96 1v160M143.500 1v160M191 1v160M238.500 1v160M1 41h286M1 80.500h286M1 121h286"/></g>
      <rect x="1" y="1" width="286" height="159.500" fill="none" stroke="#8a8a8a" stroke-width="1.400"/>
      <path d="M1.600 1V64.200L20 64.500 30 64 40.500 63.600" fill="none" stroke="#2c22dc" stroke-width="1.500"/>
    </svg>
    <!-- bottom row -->
    <div class="t dl" style="left:4px;top:183px">20.0%</div>
    <div class="a rad" style="left:63px;top:181px"><div class="a" style="left:2.500px;top:2.500px;width:8px;height:8px;border-radius:50%;background:radial-gradient(circle at 40% 40%,#7de06a,#2ea82a 70%)"></div></div>
    <div class="t dl" style="left:83px;top:183px;letter-spacing:-1.3px;word-spacing:1.5px">TEC OFF</div>
    <div class="a rad" style="left:148px;top:181px"></div>
    <div class="t dl" style="left:167px;top:183px">Manue</div>
    <div class="a rad" style="left:223px;top:181px"></div>
    <div class="t dl" style="left:243px;top:183px">Auto Contrc</div>
    <div class="t dl" style="left:322px;top:183px">-10</div>
    <!-- status row -->
    <div class="a" style="left:0;top:204px;width:354px;height:21px;background:#2c2c2c">
      <i class="a" style="left:66px;top:1px;width:1px;height:19px;background:#121212;border-right:1px solid #444;box-sizing:content-box"></i>
      <i class="a" style="left:134px;top:1px;width:1px;height:19px;background:#121212;border-right:1px solid #444;box-sizing:content-box"></i>
      <div class="t dl" style="left:8px;top:8px">6.3</div>
      <div class="t dl" style="left:80px;top:8px">-563mV</div>
      <div class="t dl" style="left:151px;top:8px">0.0%</div>
    </div>
  </div>
</div>

</body></html>
